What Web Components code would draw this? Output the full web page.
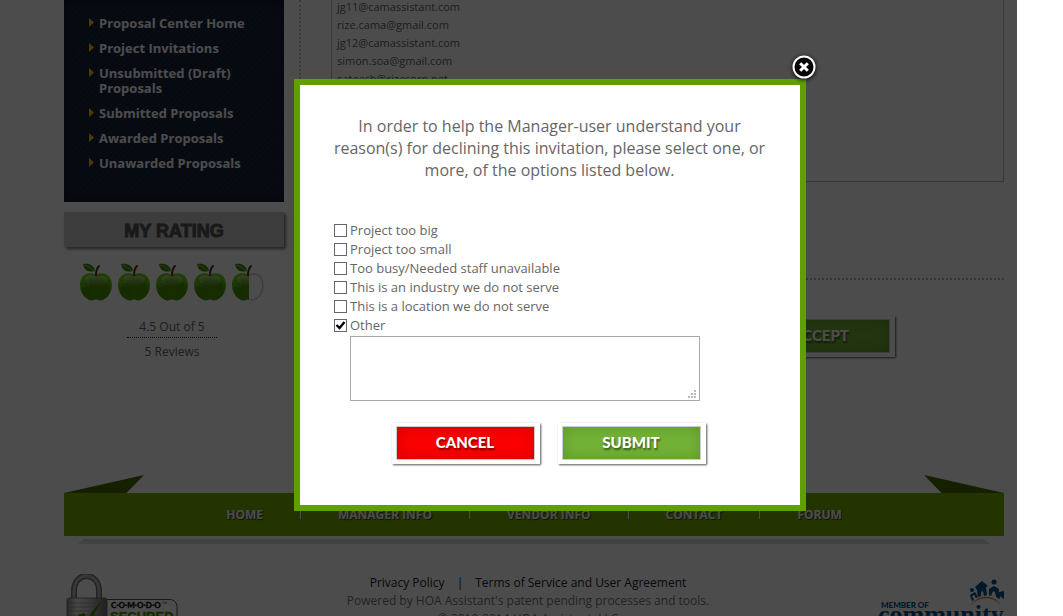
<!DOCTYPE html>
<html lang="en">
<head>
<meta charset="utf-8">
<title>Proposal Center</title>
<style>
html, body { margin: 0; height: 100%; background: #fff; }
body { overflow: hidden; font: 12px/18px "Open Sans", "Noto Sans", sans-serif; color: #666; }
</style>
</head>
<body>
<proposal-page></proposal-page>
<script>
const define = (name, html, setup) => {
  const template = document.createElement('template');
  template.innerHTML = html;
  customElements.define(name, class extends HTMLElement {
    connectedCallback() {
      if (this.shadowRoot) return;
      const root = this.attachShadow({ mode: 'open' });
      root.append(template.content.cloneNode(true));
      if (setup) setup(this, root);
    }
  });
};

define('side-link', `
<style>
:host { display: block; }
a { display: flex; gap: 5px; color: #fff; text-decoration: none; font-weight: 700; font-size: 13px; line-height: 15px; }
i { flex: none; width: 5px; height: 9px; margin-top: 2px; background: #ffc400; clip-path: polygon(0 0, 100% 50%, 0 100%); }
</style>
<a href="#"><i></i><span><slot></slot></span></a>`);

define('side-menu', `
<style>
:host { display: block; width: 220px; box-sizing: border-box; padding: 16px 30px 31px 25px;
  background: repeating-linear-gradient(135deg, #19263c 0 2px, #162237 2px 4px); box-shadow: inset 0 0 10px #0b1424; }
nav { display: flex; flex-direction: column; gap: 10px; }
</style>
<nav aria-label="Proposal center"><slot></slot></nav>`);

define('apple-mark', `
<style>:host { display: block; width: 32px; height: 38px; } svg { display: block; }</style>
<svg width="32" height="38" viewBox="0 0 32 38" aria-hidden="true">
<defs>
<radialGradient id="g" cx=".5" cy=".65" r=".6"><stop offset="0" stop-color="#4f9500"/><stop offset=".65" stop-color="#479000"/><stop offset="1" stop-color="#66d008"/></radialGradient>
<linearGradient id="h" x1="0" y1="0" x2="0" y2="1"><stop offset="0" stop-color="#fff" stop-opacity=".5"/><stop offset="1" stop-color="#fff" stop-opacity=".05"/></linearGradient>
<clipPath id="c"><rect id="r" width="32" height="38"/></clipPath>
</defs>
<path id="o" d="M16 13C11 9 1 11 1 22c0 8 5 14 10 15 3 0 3-1 5-1s2 1 5 1c5-1 10-7 10-15C31 11 21 9 16 13Z" fill="none" stroke="#ccc" stroke-width="1.500" visibility="hidden"/>
<g clip-path="url(#c)">
<path d="M16 12C11 8 0 10 0 22c0 8 5 14 11 15.500 3 0 3-1 5-1s2 1 5 1c6-1.500 11-7.500 11-15.500C32 10 21 8 16 12Z" fill="url(#g)"/>
<path d="M5 15c4-4 8-3 11-1 4-2 8-2 11 2 1 5-4 7-10 7S4 21 5 15Z" fill="url(#h)"/>
<path d="M2 18h7v6H2z" fill="#fff" opacity=".12"/>
</g>
<path d="M16 12C16 8 17 5 19 3" fill="none" stroke="#5b3411" stroke-width="2" stroke-linecap="round"/>
<path d="M15 8C8 10 4 7 3 1c6-1 11 1 12 7Z" fill="#3c8a08"/><path d="M4 2c4 1 7 3 10 6" stroke="#8bc95a" fill="none"/>
</svg>`, (host, root) => {
  if (host.hasAttribute('half')) {
    root.getElementById('r').setAttribute('width', '17');
    root.getElementById('o').setAttribute('visibility', 'visible');
  }
});

define('rating-panel', `
<style>
:host { display: block; margin-top: 10px; }
h2 { margin: 0 2px 0 0; height: 35px; background: #cacaca; box-shadow: 2px 2px 3px #777; color: #555; text-align: center;
  font: 700 18px/38px "Liberation Sans", Arial, sans-serif; -webkit-text-stroke: 1px #555; }
.body { display: flex; flex-direction: column; align-items: center; padding: 16px 6px 0 0; }
.apples { display: flex; gap: 6px; }
p { margin: 0; padding: 0 12px; }
.score { margin-top: 17px; border-bottom: 1px dotted #111; padding-bottom: 1px; }
.count { margin-top: 5px; }
</style>
<h2>MY RATING</h2>
<div class="body">
<div class="apples"><apple-mark></apple-mark><apple-mark></apple-mark><apple-mark></apple-mark><apple-mark></apple-mark><apple-mark half></apple-mark></div>
<p class="score">4.5 Out of 5</p><p class="count">5 Reviews</p>
</div>`);

define('push-button', `
<style>
:host { display: block; width: 148px; --tone: #72b236; --rim: #5f962b; }
:host([kind="cancel"]) { --tone: #fa0000; --rim: #d40000; }
button { display: block; width: 100%; height: 41px; padding: 3px 5px 4px 4px; border: 0; background: #fff;
  box-shadow: 1px 1px 2px #555; cursor: pointer; }
span { display: block; box-sizing: border-box; height: 34px; border: 1px solid #ccc; background: var(--tone); box-shadow: inset 0 0 14px var(--rim);
  color: #fff; font: 900 15px/31px Lato, "Open Sans", sans-serif; text-align: center; text-shadow: 1px 2px 2px rgba(0,0,0,.5); }
</style>
<button type="button"><span><slot></slot></span></button>`);

define('invitation-content', `
<style>
:host { display: block; border-left: 2px dotted #c4c4c4; padding-left: 30px; }
ul { display: flex; flex-direction: column; gap: 4px; list-style: none; margin: 0; padding: 0 5px; height: 181px; border: solid #bbb; border-width: 0 1px 1px; }
li { font-size: 11px; line-height: 14px; }
hr { margin: 96px 0 0; border: 0; border-top: 2px dotted #b4b4b4; }
.actions { display: flex; justify-content: flex-end; padding: 36px 109px 118px 0; }
</style>
<ul><li>jg11@camassistant.com</li><li>rize.cama@gmail.com</li><li>jg12@camassistant.com</li><li>simon.soa@gmail.com</li><li>sateesh@rizecorp.net</li></ul>
<hr>
<div class="actions"><push-button>ACCEPT</push-button></div>`);

define('ribbon-nav', `
<style>
:host { display: block; }
.folds { display: flex; justify-content: space-between; height: 18px; }
.folds i { width: 80px; background: #436b00; clip-path: polygon(0 100%, 100% 0, 78% 100%); }
.folds i:last-child { clip-path: polygon(0 0, 100% 100%, 22% 100%); }
nav { display: flex; justify-content: center; align-items: center; gap: 37px; height: 43px; background: #78ad00; }
a { color: #fff; font-weight: 700; text-decoration: none; text-shadow: 1px 1px 1px #333; line-height: 18px; }
b { width: 1px; height: 8px; background: #fff; }
.under { height: 5px; margin: 3px 14px 0; background: #ddd; clip-path: polygon(6px 0, calc(100% - 6px) 0, 100% 100%, 0 100%); }
</style>
<div class="folds"><i></i><i></i></div>
<nav aria-label="Main"><a href="#">HOME</a><b></b><a href="#">MANAGER INFO</a><b></b><a href="#">VENDOR INFO</a><b></b><a href="#">CONTACT</a><b></b><a href="#">FORUM</a></nav>
<div class="under"></div>`);

define('secure-badge', `
<style>:host { display: block; width: 114px; height: 60px; } svg { display: block; }</style>
<svg width="114" height="60" viewBox="0 0 114 60" role="img" aria-label="Comodo Secured">
<defs><linearGradient id="m"><stop offset="0" stop-color="#888"/><stop offset=".25" stop-color="#eee"/><stop offset=".6" stop-color="#bbb"/><stop offset="1" stop-color="#666"/></linearGradient></defs>
<rect x="20" y="25.500" width="93" height="40" rx="7" fill="none" stroke="#555"/>
<path d="M10 25V17C10 -3 35 -3 35 17V25" fill="none" stroke="#777" stroke-width="6"/>
<path d="M10 25V17C10 -3 35 -3 35 17V25" fill="none" stroke="#bbb" stroke-width="3"/>
<rect x="3" y="24" width="40" height="40" rx="2" fill="url(#m)" stroke="#777"/>
<path d="M5 29H41M5 33H41M5 37H41M5 41H41" stroke="#888" opacity=".6"/>
<path d="M14 41l6-2 4 6c4-8 8-13 15-19-6 8-10 15-13 25Z" fill="#3f8500"/>
<text x="47" y="34" font-family="Lato, sans-serif" font-weight="900" font-size="8" fill="#111" stroke="#111" stroke-width=".3">C·O·M·O·D·O</text>
<text x="98" y="31" font-family="Liberation Sans, sans-serif" font-size="5" fill="#111">™</text>
<text x="46" y="47" font-family="Liberation Sans, sans-serif" font-weight="700" font-size="13" fill="#4b9500" stroke="#4b9500" stroke-width=".5">SECURED</text>
</svg>`);

define('community-logo', `
<style>:host { display: block; width: 126px; height: 60px; } svg { display: block; }</style>
<svg width="126" height="60" viewBox="0 0 126 60" role="img" aria-label="Member of community">
<text x="3" y="34" font-family="Lato, sans-serif" font-weight="900" font-size="8" fill="#05508c">MEMBER OF</text>
<text x="0" y="49" font-family="Liberation Serif, serif" font-weight="700" font-size="26" fill="#05508c">community</text>
<g fill="#05508c"><circle cx="94" cy="16" r="2"/><circle cx="116" cy="8" r="2.500"/>
<path d="M92 21l5-3 3 5-2 1-2-3-2 1 2 4-2 1ZM97 13l7-6 6 5-2 1 1 8-3 1-1-5-2 1v4l-3 1-1-7ZM111 15l5-3 5 3-1 8h-2l-1-5-2-1-2 5-2-1ZM121 18l5-1v8l-2-1-1-2-2 3-2-1Z"/></g>
<path d="M93 31C100 20 116 20 123 31 115 22 101 22 93 31Z" fill="#d58a20"/>
</svg>`);

define('site-footer', `
<style>
:host { display: flex; justify-content: space-between; align-items: flex-start; padding-top: 30px; }
.copy { text-align: center; color: #777; }
.links { display: flex; justify-content: center; gap: 12px; color: #223; }
a { color: #223; text-decoration: none; }
p { margin: 0; }
</style>
<secure-badge></secure-badge>
<div class="copy"><div class="links"><a href="#">Privacy Policy</a><span>|</span><a href="#">Terms of Service and User Agreement</a></div>
<p>Powered by HOA Assistant's patent pending processes and tools.</p><p>© 2010-2014 HOA Assistant, LLC</p></div>
<community-logo></community-logo>`);

define('reason-option', `
<style>
:host { display: block; }
label { display: flex; align-items: center; gap: 3px; height: 19px; font-size: 13px; color: #666; }
span { line-height: 18px; padding-bottom: 1px; }
input { appearance: none; flex: none; width: 13px; height: 13px; margin: 0; border: 1px solid #666; background: #fff; }
input:checked { background: #fff url("data:image/svg+xml,%3Csvg xmlns='http://www.w3.org/2000/svg' viewBox='0 0 11 11'%3E%3Cpath d='M1.500 5L4.500 8 9.500 2' fill='none' stroke='%23000' stroke-width='2.400'/%3E%3C/svg%3E"); }
</style>
<label><input type="checkbox"><span><slot></slot></span></label>`, (host, root) => {
  root.querySelector('input').checked = host.hasAttribute('checked');
});

define('decline-dialog', `
<style>
:host { display: block; position: relative; box-sizing: border-box; width: 512px; max-width: 100%; border: 6px solid #609f00; background: #fff; padding: 30px 25px 41px 24px; }
p { margin: 0 0 40px; font-size: 16px; line-height: 22px; text-align: center; }
.reasons { padding-left: 10px; }
textarea { display: block; box-sizing: border-box; width: 350px; height: 65px; margin: 1px 0 22px 26px; border: 1px solid #aaa; background: #fff; font: 13px/18px "Open Sans", sans-serif; resize: both; }
textarea::-webkit-resizer { background: no-repeat right 3px bottom 2px / 8px 8px url("data:image/svg+xml,%3Csvg xmlns='http://www.w3.org/2000/svg' viewBox='0 0 8 8'%3E%3Cpath d='M6 0h2v2H6zM3 3h2v2H3zM6 3h2v2H6zM0 6h2v2H0zM3 6h2v2H3zM6 6h2v2H6z' fill='%23bbb'/%3E%3C/svg%3E"); }
.actions { display: flex; justify-content: center; gap: 18px; padding-right: 2px; }
.close { position: absolute; top: -31px; right: -18px; width: 28px; height: 28px; padding: 0; border: 0; background: none; cursor: pointer; }
svg { display: block; overflow: visible; filter: drop-shadow(0 1px 2px #000); }
</style>
<section role="dialog" aria-label="Decline invitation">
<button class="close" type="button" aria-label="Close"><svg width="28" height="28" viewBox="0 0 28 28"><circle cx="14" cy="13" r="10.500" fill="#050505" stroke="#fff" stroke-width="2"/><path d="M10.200 9.200l7.600 7.600m0-7.600l-7.600 7.600" stroke="#fff" stroke-width="3"/></svg></button>
<p>In order to help the Manager-user understand your reason(s) for declining this invitation, please select one, or more, of the options listed below.</p>
<div class="reasons">
<reason-option>Project too big</reason-option><reason-option>Project too small</reason-option><reason-option>Too busy/Needed staff unavailable</reason-option><reason-option>This is an industry we do not serve</reason-option><reason-option>This is a location we do not serve</reason-option><reason-option checked>Other</reason-option>
</div>
<textarea aria-label="Other reason"></textarea>
<div class="actions"><push-button kind="cancel">CANCEL</push-button><push-button>SUBMIT</push-button></div>
</section>`);

define('proposal-page', `
<style>
:host { display: block; position: relative; height: 100vh; overflow: hidden; }
.page { padding: 0 59px 0 64px; }
.columns { display: grid; grid-template-columns: 222px minmax(0, 1fr); column-gap: 13px; }
.shade { position: absolute; inset: 0 46px 0 0; background: rgba(0,0,0,.7); }
.layer { position: absolute; inset: 0; display: flex; justify-content: center; align-items: flex-start; padding: 79px 0 0 37px; }
</style>
<div class="page">
<div class="columns">
<aside><side-menu><side-link>Proposal Center Home</side-link><side-link>Project Invitations</side-link><side-link>Unsubmitted (Draft) Proposals</side-link><side-link>Submitted Proposals</side-link><side-link>Awarded Proposals</side-link><side-link>Unawarded Proposals</side-link></side-menu>
<rating-panel></rating-panel></aside>
<invitation-content></invitation-content>
</div>
<ribbon-nav></ribbon-nav>
<site-footer></site-footer>
</div>
<div class="shade"></div>
<div class="layer"><decline-dialog></decline-dialog></div>`);
</script>
</body>
</html>
